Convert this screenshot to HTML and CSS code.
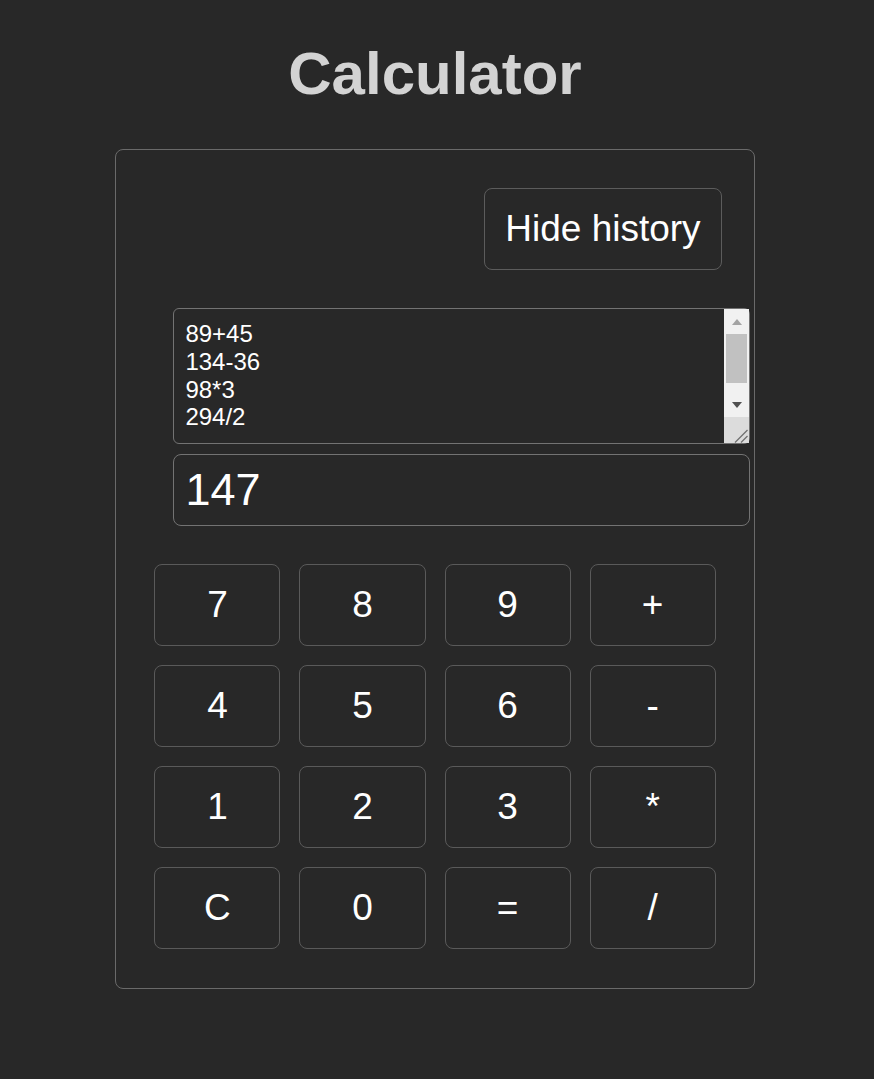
FILE: index.html
```html
<!DOCTYPE html>
<html lang="en">
<head>
<meta charset="utf-8">
<title>Calculator</title>
<link rel="stylesheet" href="styles.css">
</head>
<body>
<div class="page">
  <h1 class="title">Calculator</h1>
  <div class="card">
    <div class="toolbar">
      <button class="toggle" type="button">Hide history</button>
    </div>
    <div class="history">
      <div class="history-text">89+45<br>134-36<br>98*3<br>294/2</div>
      <div class="scrollbar">
        <div class="sb-btn"><span class="arrow-up"></span></div>
        <div class="sb-thumb"></div>
        <div class="sb-track"></div>
        <div class="sb-btn"><span class="arrow-down"></span></div>
        <div class="sb-corner">
          <svg width="25" height="26" viewBox="0 0 25 26">
            <line x1="11" y1="25.5" x2="23.5" y2="13" stroke="#6f6f6f" stroke-width="1.2"/>
            <line x1="17" y1="25.5" x2="23.5" y2="19" stroke="#6f6f6f" stroke-width="1.2"/>
          </svg>
        </div>
      </div>
    </div>
    <div class="display">147</div>
    <div class="keys">
      <button class="key" type="button">7</button>
      <button class="key" type="button">8</button>
      <button class="key" type="button">9</button>
      <button class="key" type="button">+</button>
      <button class="key" type="button">4</button>
      <button class="key" type="button">5</button>
      <button class="key" type="button">6</button>
      <button class="key" type="button">-</button>
      <button class="key" type="button">1</button>
      <button class="key" type="button">2</button>
      <button class="key" type="button">3</button>
      <button class="key" type="button">*</button>
      <button class="key" type="button">C</button>
      <button class="key" type="button">0</button>
      <button class="key" type="button">=</button>
      <button class="key" type="button">/</button>
    </div>
  </div>
</div>
</body>
</html>
```

FILE: styles.css
```css
* {
  box-sizing: border-box;
}

html, body {
  margin: 0;
  background: #282828;
}

body {
  font-family: "Liberation Sans", Arial, sans-serif;
  color: #ffffff;
}

.page {
  padding-right: 4px;
  padding-bottom: 40px;
}

.title {
  margin: 39px 0 41px;
  text-align: center;
  font-size: 60px;
  font-weight: bold;
  line-height: 69px;
  color: #d3d3d3;
}

.card {
  width: 640px;
  margin: 0 auto;
  padding: 38.4px;
  border: 1px solid #6a6a6a;
  border-radius: 8px;
}

.toolbar {
  display: flex;
  justify-content: flex-end;
  margin-right: -6px;
}

.toggle {
  height: 82px;
  padding: 0 20px;
  font-family: inherit;
  font-size: 37px;
  color: #ffffff;
  background: transparent;
  border: 1px solid #5c5c5c;
  border-radius: 8px;
}

.history {
  position: relative;
  width: 577px;
  height: 136px;
  margin: 38px 0 0 19px;
  border: 1px solid #737373;
  border-radius: 6px;
}

.history-text {
  height: 100%;
  overflow: hidden;
  padding: 11px 11px;
  font-size: 24px;
  line-height: 27.6px;
  color: #ffffff;
}

.scrollbar {
  position: absolute;
  top: 0;
  right: 0;
  bottom: 0;
  width: 25px;
  display: flex;
  flex-direction: column;
  background: #f1f1f1;
}

.sb-btn {
  height: 25px;
  display: flex;
  align-items: center;
  justify-content: center;
}

.arrow-up {
  width: 0;
  height: 0;
  border-left: 5.5px solid transparent;
  border-right: 5.5px solid transparent;
  border-bottom: 6px solid #a3a3a3;
}

.arrow-down {
  width: 0;
  height: 0;
  border-left: 5.5px solid transparent;
  border-right: 5.5px solid transparent;
  border-top: 6px solid #505050;
}

.sb-thumb {
  height: 49px;
  margin: 0 2px;
  background: #c1c1c1;
}

.sb-track {
  height: 9px;
}

.sb-corner {
  flex: 1;
  background: #dcdcdc;
  display: flex;
  align-items: flex-end;
}

.sb-corner svg {
  display: block;
}

.display {
  display: flex;
  align-items: center;
  width: 577px;
  height: 72px;
  margin: 10px 0 0 19px;
  padding: 0 11px;
  font-size: 45px;
  color: #ffffff;
  border: 1px solid #737373;
  border-radius: 8px;
}

.keys {
  display: grid;
  grid-template-columns: repeat(4, 1fr);
  grid-auto-rows: 82px;
  gap: 19px 19px;
  margin-top: 38px;
}

.key {
  font-family: inherit;
  font-size: 37px;
  color: #ffffff;
  background: transparent;
  border: 1px solid #5a5a5a;
  border-radius: 8px;
  padding: 0;
}
```
